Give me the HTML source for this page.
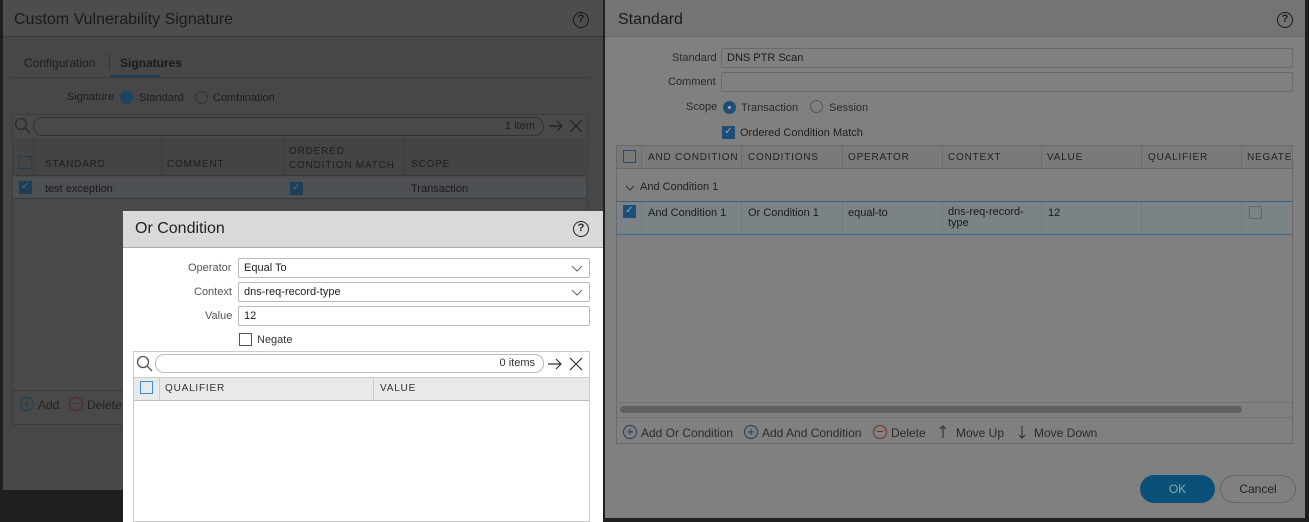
<!DOCTYPE html>
<html><head><meta charset="utf-8"><style>
*{box-sizing:border-box;margin:0;padding:0}
body{width:1309px;height:522px;background:#1f1f1f;position:relative;overflow:hidden;font-family:"Liberation Sans",sans-serif;font-size:11px;color:#222}
.a{position:absolute}
.hdr{font-size:16px}
.help{width:16px;height:16px;border:1.5px solid currentColor;border-radius:50%;font-size:11px;text-align:center;line-height:13px;font-weight:bold}
.th{font-size:10px;letter-spacing:.8px}
.cb{width:13px;height:13px;border:1.5px solid}
.inp{border:1px solid;border-radius:2px;padding-left:5px;line-height:18px}
</style></head><body>

<!-- LEFT DIALOG -->
<div class="a" style="left:3px;top:0;width:600px;height:490px;background:#474747"></div>
<div class="a" style="left:3px;top:0;width:600px;height:37px;background:#4d4d4d;border-bottom:1px solid #3a3a3a"></div>
<div class="a hdr" style="left:14px;top:11px;color:#1a1a1a">Custom Vulnerability Signature</div>
<div class="a help" style="left:573px;top:12px;color:#1a1a1a">?</div>
<div class="a" style="left:24px;top:56px;color:#1e1e1e;font-size:12px">Configuration</div>
<div class="a" style="left:109px;top:54px;width:1px;height:16px;background:#333"></div>
<div class="a" style="left:120px;top:56px;color:#1a1a1a;font-size:12px;font-weight:bold">Signatures</div>
<div class="a" style="left:110px;top:75px;width:50px;height:2px;background:#1d4058"></div>
<div class="a" style="left:11px;top:77px;width:578px;height:1px;background:#3a3a3a"></div>
<div class="a" style="left:67px;top:91px;color:#1e1e1e">Signature</div>
<div class="a" style="left:120px;top:91px;width:13px;height:13px;border-radius:50%;background:#1d4563"></div>
<div class="a" style="left:139px;top:92px;color:#1e1e1e">Standard</div>
<div class="a" style="left:195px;top:91px;width:13px;height:13px;border-radius:50%;border:1px solid #333"></div>
<div class="a" style="left:213px;top:92px;color:#1e1e1e">Combination</div>
<div class="a" style="left:12px;top:114px;width:576px;height:311px;border:1px solid #3d3d3d;background:#494949"></div>
<svg class="a" style="left:14px;top:117px" width="18" height="18"><circle cx="7" cy="7" r="5.5" fill="none" stroke="#2a2a2a" stroke-width="1.3"/><line x1="11" y1="11" x2="16" y2="16" stroke="#2a2a2a" stroke-width="1.3"/></svg>
<div class="a" style="left:33px;top:117px;width:511px;height:19px;border:1px solid #333;border-radius:9px;text-align:right;padding-right:8px;line-height:17px;color:#1e1e1e">1 item</div>
<svg class="a" style="left:548px;top:119px" width="16" height="14"><path d="M1 7H14M9 2L14 7L9 12" fill="none" stroke="#222" stroke-width="1.2"/></svg>
<svg class="a" style="left:569px;top:119px" width="14" height="14"><path d="M1 1L13 13M13 1L1 13" stroke="#222" stroke-width="1.2"/></svg>
<div class="a" style="left:13px;top:138px;width:573px;height:38px;background:#444;border-bottom:1px solid #3a3a3a"></div>
<div class="a cb" style="left:19px;top:156px;border-color:#1d4058"></div>
<div class="a" style="left:33px;top:138px;width:1px;height:38px;background:#3a3a3a"></div>
<div class="a" style="left:161px;top:138px;width:1px;height:38px;background:#3a3a3a"></div>
<div class="a" style="left:283px;top:138px;width:1px;height:38px;background:#3a3a3a"></div>
<div class="a" style="left:404px;top:138px;width:1px;height:38px;background:#3a3a3a"></div>
<div class="a th" style="left:45px;top:159px;color:#1e1e1e">STANDARD</div>
<div class="a th" style="left:167px;top:159px;color:#1e1e1e">COMMENT</div>
<div class="a th" style="left:289px;top:145px;color:#1e1e1e;line-height:14px">ORDERED<br>CONDITION MATCH</div>
<div class="a th" style="left:411px;top:159px;color:#1e1e1e">SCOPE</div>
<div class="a" style="left:13px;top:177px;width:573px;height:22px;background:#4c5053;border-bottom:1px solid #2c3c48"></div>
<div class="a cb" style="left:19px;top:181px;background:#1d4058;border-color:#1d4058;color:#4a6a80;font-size:10px;line-height:10px;text-align:center">✓</div>
<div class="a" style="left:45px;top:183px;color:#1a1a1a">test exception</div>
<div class="a cb" style="left:290px;top:182px;background:#1d4058;border-color:#1d4058;color:#4a6a80;font-size:10px;line-height:10px;text-align:center">✓</div>
<div class="a" style="left:411px;top:183px;color:#1a1a1a">Transaction</div>
<div class="a" style="left:13px;top:390px;width:573px;height:1px;background:#3a3a3a"></div>
<div class="a" style="left:20px;top:397px;width:14px;height:14px;border:1px solid #1d4058;border-radius:50%;color:#1d4058;text-align:center;line-height:12px;font-size:13px">+</div>
<div class="a" style="left:38px;top:398px;color:#222;font-size:12px">Add</div>
<div class="a" style="left:69px;top:397px;width:14px;height:14px;border:1px solid #5a2222;border-radius:50%;color:#5a2222;text-align:center;line-height:11px;font-size:13px">−</div>
<div class="a" style="left:87px;top:398px;color:#222;font-size:12px">Delete</div>

<!-- RIGHT DIALOG -->
<div class="a" style="left:605px;top:0;width:700px;height:518px;background:#808080"></div>
<div class="a" style="left:605px;top:0;width:700px;height:37px;background:#747474;border-bottom:1px solid #666"></div>
<div class="a hdr" style="left:618px;top:11px;color:#1a1a1a">Standard</div>
<div class="a help" style="left:1277px;top:12px;color:#1a1a1a">?</div>
<div class="a" style="left:672px;top:52px;color:#2a2a2a">Standard</div>
<div class="a inp" style="left:721px;top:48px;width:572px;height:20px;border-color:#6a6a6a;color:#1a1a1a">DNS PTR Scan</div>
<div class="a" style="left:668px;top:76px;color:#2a2a2a">Comment</div>
<div class="a inp" style="left:721px;top:72px;width:572px;height:20px;border-color:#6a6a6a"></div>
<div class="a" style="left:686px;top:101px;color:#2a2a2a">Scope</div>
<div class="a" style="left:723px;top:101px;width:13px;height:13px;border-radius:50%;background:#1d4e78"></div>
<div class="a" style="left:728px;top:106px;width:3px;height:3px;border-radius:50%;background:#aaa"></div>
<div class="a" style="left:741px;top:102px;color:#2a2a2a">Transaction</div>
<div class="a" style="left:810px;top:100px;width:13px;height:13px;border-radius:50%;border:1px solid #555"></div>
<div class="a" style="left:829px;top:102px;color:#2a2a2a">Session</div>
<div class="a cb" style="left:722px;top:126px;background:#1d4e78;border-color:#1d4e78;color:#9ab;font-size:10px;line-height:10px;text-align:center">✓</div>
<div class="a" style="left:740px;top:127px;color:#1e1e1e">Ordered Condition Match</div>
<div class="a" style="left:616px;top:145px;width:677px;height:299px;border:1px solid #6a6a6a"></div>
<div class="a" style="left:617px;top:146px;width:675px;height:23px;background:#7a7a7a;border-bottom:1px solid #6a6a6a"></div>
<div class="a cb" style="left:623px;top:150px;border-color:#1d4e78"></div>
<div class="a" style="left:641px;top:146px;width:1px;height:23px;background:#6c6c6c"></div>
<div class="a" style="left:741px;top:146px;width:1px;height:23px;background:#6c6c6c"></div>
<div class="a" style="left:842px;top:146px;width:1px;height:23px;background:#6c6c6c"></div>
<div class="a" style="left:942px;top:146px;width:1px;height:23px;background:#6c6c6c"></div>
<div class="a" style="left:1041px;top:146px;width:1px;height:23px;background:#6c6c6c"></div>
<div class="a" style="left:1141px;top:146px;width:1px;height:23px;background:#6c6c6c"></div>
<div class="a" style="left:1241px;top:146px;width:1px;height:23px;background:#6c6c6c"></div>
<div class="a th" style="left:648px;top:152px;color:#222">AND CONDITION</div>
<div class="a th" style="left:748px;top:152px;color:#222">CONDITIONS</div>
<div class="a th" style="left:848px;top:152px;color:#222">OPERATOR</div>
<div class="a th" style="left:948px;top:152px;color:#222">CONTEXT</div>
<div class="a th" style="left:1047px;top:152px;color:#222">VALUE</div>
<div class="a th" style="left:1148px;top:152px;color:#222">QUALIFIER</div>
<div class="a th" style="left:1247px;top:152px;color:#222">NEGATE</div>
<svg class="a" style="left:625px;top:184px" width="10" height="8"><path d="M1 2L5 6L9 2" fill="none" stroke="#333" stroke-width="1"/></svg>
<div class="a" style="left:640px;top:181px;color:#1e1e1e">And Condition 1</div>
<div class="a" style="left:617px;top:201px;width:675px;height:34px;background:#7c8387;border-top:1px solid #3c5e78;border-bottom:1px solid #3c6d8e"></div>
<div class="a" style="left:641px;top:202px;width:1px;height:32px;background:#727a80"></div>
<div class="a" style="left:741px;top:202px;width:1px;height:32px;background:#727a80"></div>
<div class="a" style="left:842px;top:202px;width:1px;height:32px;background:#727a80"></div>
<div class="a" style="left:942px;top:202px;width:1px;height:32px;background:#727a80"></div>
<div class="a" style="left:1041px;top:202px;width:1px;height:32px;background:#727a80"></div>
<div class="a" style="left:1141px;top:202px;width:1px;height:32px;background:#727a80"></div>
<div class="a" style="left:1241px;top:202px;width:1px;height:32px;background:#727a80"></div>
<div class="a cb" style="left:623px;top:205px;background:#1d4e78;border-color:#1d4e78;color:#9ab;font-size:10px;line-height:10px;text-align:center">✓</div>
<div class="a" style="left:648px;top:207px;color:#1a1a1a">And Condition 1</div>
<div class="a" style="left:748px;top:207px;color:#1a1a1a">Or Condition 1</div>
<div class="a" style="left:848px;top:207px;color:#1a1a1a">equal-to</div>
<div class="a" style="left:948px;top:207px;color:#1a1a1a;line-height:11px">dns-req-record-<br>type</div>
<div class="a" style="left:1048px;top:207px;color:#1a1a1a">12</div>
<div class="a" style="left:1249px;top:206px;width:13px;height:13px;border:1px solid #666"></div>
<div class="a" style="left:617px;top:402px;width:675px;height:1px;background:#737373"></div>
<div class="a" style="left:620px;top:406px;width:622px;height:7px;border-radius:4px;background:#606060"></div>
<div class="a" style="left:617px;top:417px;width:675px;height:1px;background:#737373"></div>
<div class="a" style="left:623px;top:425px;width:14px;height:14px;border:1px solid #1d4058;border-radius:50%;color:#1d4058;text-align:center;line-height:12px;font-size:13px">+</div>
<div class="a" style="left:641px;top:426px;color:#2a2a2a;font-size:12px">Add Or Condition</div>
<div class="a" style="left:744px;top:425px;width:14px;height:14px;border:1px solid #1d4058;border-radius:50%;color:#1d4058;text-align:center;line-height:12px;font-size:13px">+</div>
<div class="a" style="left:762px;top:426px;color:#2a2a2a;font-size:12px">Add And Condition</div>
<div class="a" style="left:873px;top:425px;width:14px;height:14px;border:1px solid #7a2a2a;border-radius:50%;color:#7a2a2a;text-align:center;line-height:11px;font-size:13px">−</div>
<div class="a" style="left:891px;top:426px;color:#2a2a2a;font-size:12px">Delete</div>
<svg class="a" style="left:939px;top:425px" width="8" height="14"><path d="M4 13V1M1 4L4 1L7 4" fill="none" stroke="#2a2a2a" stroke-width="1"/></svg>
<div class="a" style="left:956px;top:426px;color:#2a2a2a;font-size:12px">Move Up</div>
<svg class="a" style="left:1018px;top:425px" width="8" height="14"><path d="M4 1V13M1 10L4 13L7 10" fill="none" stroke="#2a2a2a" stroke-width="1"/></svg>
<div class="a" style="left:1034px;top:426px;color:#2a2a2a;font-size:12px">Move Down</div>
<div class="a" style="left:1140px;top:475px;width:75px;height:28px;border-radius:14px;background:#0b5079;color:#8aa;text-align:center;line-height:28px;font-size:12px">OK</div>
<div class="a" style="left:1220px;top:475px;width:76px;height:28px;border-radius:14px;border:1px solid #666;color:#222;text-align:center;line-height:26px;font-size:12px">Cancel</div>

<!-- OR CONDITION -->
<div class="a" style="left:123px;top:211px;width:480px;height:311px;background:#fff"></div>
<div class="a" style="left:123px;top:211px;width:480px;height:37px;background:#d8d9db;border-bottom:1px solid #aaa"></div>
<div class="a hdr" style="left:135px;top:220px;color:#222">Or Condition</div>
<div class="a help" style="left:573px;top:221px;color:#222">?</div>
<div class="a" style="left:188px;top:262px;color:#555">Operator</div>
<div class="a inp" style="left:238px;top:258px;width:352px;height:20px;border-color:#bbb;color:#222">Equal To</div>
<svg class="a" style="left:571px;top:265px" width="12" height="7"><path d="M1 1L6 6L11 1" fill="none" stroke="#666" stroke-width="1"/></svg>
<div class="a" style="left:194px;top:286px;color:#555">Context</div>
<div class="a inp" style="left:238px;top:282px;width:352px;height:20px;border-color:#bbb;color:#222">dns-req-record-type</div>
<svg class="a" style="left:571px;top:289px" width="12" height="7"><path d="M1 1L6 6L11 1" fill="none" stroke="#666" stroke-width="1"/></svg>
<div class="a" style="left:205px;top:310px;color:#555">Value</div>
<div class="a inp" style="left:238px;top:306px;width:352px;height:20px;border-color:#bbb;color:#222">12</div>
<div class="a cb" style="left:239px;top:333px;border:1px solid #555"></div>
<div class="a" style="left:257px;top:334px;color:#333">Negate</div>
<div class="a" style="left:133px;top:351px;width:457px;height:171px;border:1px solid #ccc"></div>
<svg class="a" style="left:136px;top:355px" width="18" height="18"><circle cx="7" cy="7" r="5.5" fill="none" stroke="#555" stroke-width="1.3"/><line x1="11" y1="11" x2="16" y2="16" stroke="#555" stroke-width="1.3"/></svg>
<div class="a" style="left:155px;top:354px;width:389px;height:19px;border:1px solid #bbb;border-radius:9px;text-align:right;padding-right:8px;line-height:17px;color:#333">0 items</div>
<svg class="a" style="left:547px;top:357px" width="16" height="14"><path d="M1 7H14M9 2L14 7L9 12" fill="none" stroke="#333" stroke-width="1.2"/></svg>
<svg class="a" style="left:569px;top:357px" width="14" height="14"><path d="M1 1L13 13M13 1L1 13" stroke="#333" stroke-width="1.2"/></svg>
<div class="a" style="left:134px;top:377px;width:455px;height:24px;background:#e8e9ea;border-top:1px solid #ccc;border-bottom:1px solid #bbb"></div>
<div class="a cb" style="left:140px;top:381px;border-color:#3b8fc6"></div>
<div class="a" style="left:159px;top:377px;width:1px;height:24px;background:#ccc"></div>
<div class="a" style="left:373px;top:377px;width:1px;height:24px;background:#ccc"></div>
<div class="a th" style="left:165px;top:383px;color:#333">QUALIFIER</div>
<div class="a th" style="left:380px;top:383px;color:#333">VALUE</div>
</body></html>
